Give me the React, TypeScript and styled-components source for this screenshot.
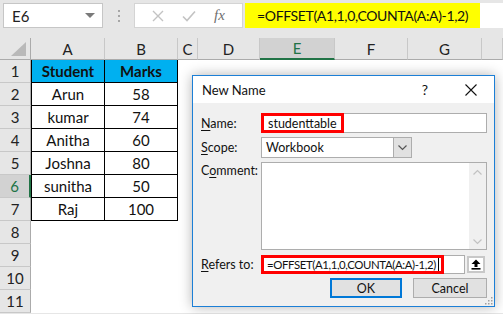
import React from 'react';
import styled, { createGlobalStyle } from 'styled-components';

const GlobalStyle = createGlobalStyle`
  html, body {
    margin: 0;
    padding: 0;
  }
  body {
    background: #fff;
    font-family: Lato, "Liberation Sans", sans-serif;
  }
`;

const GREEN = '#217346';

const Screen = styled.div`
  position: relative;
  width: 503px;
  height: 314px;
  overflow: hidden;
  background: #e6e6e6;
`;

/* ---------- formula bar ---------- */

const FormulaBar = styled.div`
  display: flex;
  align-items: flex-start;
  height: 38px;
  padding-top: 3px;
  padding-left: 3px;
  box-sizing: border-box;
`;

const NameBox = styled.div`
  display: flex;
  align-items: center;
  justify-content: space-between;
  width: 100px;
  height: 25px;
  box-sizing: border-box;
  padding: 0 7px 0 8px;
  background: #fff;
  border: 1px solid #c6c6c6;
  font-size: 15px;
  color: #222;
`;

const DropArrow = styled.span`
  width: 0;
  height: 0;
  border-left: 5px solid transparent;
  border-right: 5px solid transparent;
  border-top: 5px solid #7a7a7a;
`;

const Grip = styled.div`
  width: 31px;
  height: 25px;
  display: flex;
  flex-direction: column;
  align-items: center;
  justify-content: center;
  gap: 3px;

  span {
    width: 2px;
    height: 2px;
    background: #a6a6a6;
  }
`;

const FxBox = styled.div`
  display: flex;
  align-items: center;
  justify-content: space-around;
  width: 109px;
  height: 25px;
  box-sizing: border-box;
  padding: 0 8px;
  background: #fff;
  border: 1px solid #d4d4d4;
  color: #c3c3c3;
`;

const FxLabel = styled.span`
  font-family: "Liberation Serif", serif;
  font-style: italic;
  font-size: 15px;
  color: #6f6f6f;
`;

const FormulaInput = styled.div`
  flex: 1;
  height: 25px;
  margin-left: 2px;
  background: #fff;
  display: flex;
`;

const YellowText = styled.span`
  display: flex;
  align-items: center;
  width: 235px;
  padding-left: 12px;
  box-sizing: border-box;
  background: #ffff00;
  font-size: 14px;
  letter-spacing: -0.35px;
  color: #111;
  white-space: nowrap;
`;

/* ---------- sheet grid ---------- */

const Sheet = styled.div`
  display: grid;
  grid-template-columns: 31px 74px 73px 20px 62px 75px 73px 74px 21px;
  grid-template-rows: 22px repeat(11, 23px);
  font-size: 15px;
  color: #111;
`;

const Corner = styled.div`
  position: relative;
  background: #e6e6e6;
  border-right: 1px solid #ababab;
  border-bottom: 1px solid #ababab;
  box-sizing: border-box;

  &::after {
    content: '';
    position: absolute;
    right: 4px;
    bottom: 3px;
    width: 0;
    height: 0;
    border-left: 15px solid transparent;
    border-bottom: 14px solid #b9b9b9;
  }
`;

const ColHeader = styled.div<{ $selected?: boolean }>`
  display: flex;
  align-items: center;
  justify-content: center;
  box-sizing: border-box;
  background: ${({ $selected }) => ($selected ? '#d2d2d2' : '#e6e6e6')};
  color: ${({ $selected }) => ($selected ? GREEN : '#222')};
  border-right: 1px solid #c8c8c8;
  border-bottom: ${({ $selected }) => ($selected ? `2px solid ${GREEN}` : '1px solid #ababab')};
`;

const RowHeader = styled.div<{ $selected?: boolean }>`
  display: flex;
  align-items: center;
  justify-content: center;
  box-sizing: border-box;
  background: ${({ $selected }) => ($selected ? '#d2d2d2' : '#e6e6e6')};
  color: ${({ $selected }) => ($selected ? GREEN : '#222')};
  border-bottom: 1px solid #c8c8c8;
  border-right: ${({ $selected }) => ($selected ? `2px solid ${GREEN}` : '1px solid #ababab')};
`;

const Cell = styled.div`
  background: #fff;
`;

const TableCell = styled.div<{ $head?: boolean; $first?: boolean }>`
  display: flex;
  align-items: center;
  justify-content: center;
  box-sizing: border-box;
  background: ${({ $head }) => ($head ? '#00b0f0' : '#fff')};
  font-weight: ${({ $head }) => ($head ? 700 : 400)};
  border-right: 1px solid #000;
  border-bottom: 1px solid #000;
  border-left: ${({ $first }) => ($first ? '1px solid #000' : 'none')};
`;

/* ---------- dialog ---------- */

const Dialog = styled.div`
  position: absolute;
  left: 192px;
  top: 75px;
  width: 303px;
  height: 232px;
  box-sizing: border-box;
  border: 1px solid #1c7fd6;
  background: #f0f0f0;
  box-shadow: 0 0 12px rgba(0, 0, 0, 0.3);
  font-family: Lato, "Liberation Sans", sans-serif;
  font-size: 12.5px;
  color: #111;
  display: flex;
  flex-direction: column;
`;

const TitleBar = styled.div`
  display: flex;
  align-items: center;
  justify-content: space-between;
  height: 27px;
  padding-left: 9px;
  background: #fff;
`;

const Title = styled.span`
  font-size: 13px;
  color: #111;
`;

const TitleButtons = styled.div`
  display: flex;
  align-items: center;
`;

const TitleButton = styled.span`
  display: flex;
  align-items: center;
  justify-content: center;
  width: 46px;
  height: 27px;
  font-size: 14px;
`;

const Body = styled.div`
  flex: 1;
  display: flex;
  flex-direction: column;
  gap: 4px;
  padding: 10px 7px 0 8px;
`;

const Form = styled.div`
  display: grid;
  grid-template-columns: 60px 226px;
  grid-template-rows: 20px 21px 88px 20px;
  row-gap: 4px;
`;

const Label = styled.label<{ $top?: boolean }>`
  display: flex;
  align-items: ${({ $top }) => ($top ? 'flex-start' : 'center')};
  padding-top: ${({ $top }) => ($top ? '1px' : '0')};
  white-space: nowrap;

  u {
    text-decoration-thickness: 1px;
    text-underline-offset: 2px;
  }
`;

const TextBox = styled.div<{ $width?: number }>`
  display: flex;
  align-items: stretch;
  width: ${({ $width }) => ($width ? `${$width}px` : '100%')};
  box-sizing: border-box;
  background: #fff;
  border: 1px solid #adadad;
`;

const RedMark = styled.span<{ $width: number; $tight?: boolean }>`
  display: flex;
  align-items: center;
  width: ${({ $width }) => $width}px;
  margin: -1px 0 -1px -1px;
  padding-left: ${({ $tight }) => ($tight ? '3px' : '4px')};
  box-sizing: border-box;
  border: 3px solid #ff0000;
  white-space: nowrap;
  font-size: ${({ $tight }) => ($tight ? '11.4px' : '12.5px')};
  letter-spacing: ${({ $tight }) => ($tight ? '-0.38px' : 'normal')};
`;

const Caret = styled.span`
  width: 1px;
  height: 13px;
  margin-left: 2px;
  background: #000;
`;

const SelectText = styled.span`
  flex: 1;
  display: flex;
  align-items: center;
  padding-left: 4px;
`;

const SelectButton = styled.span`
  display: flex;
  align-items: center;
  justify-content: center;
  width: 17px;
  margin: -1px -1px -1px 0;
  background: #e1e1e1;
  border: 1px solid #adadad;
  color: #555;
`;

const CommentBox = styled.div`
  display: flex;
  justify-content: flex-end;
  box-sizing: border-box;
  background: #fff;
  border: 1px solid #adadad;
`;

const ScrollBar = styled.div`
  width: 17px;
  display: flex;
  flex-direction: column;
  justify-content: space-between;
  align-items: center;
  padding: 6px 0 4px;
  background: #f0f0f0;
  color: #c2c2c2;
`;

const RefersRow = styled.div`
  display: flex;
  align-items: center;
  gap: 2px;
`;

const CollapseButton = styled.span`
  display: flex;
  align-items: center;
  justify-content: center;
  width: 18px;
  height: 17px;
  box-sizing: border-box;
  background: #fff;
  border: 2px solid #c8c8c8;
`;

const Buttons = styled.div`
  display: flex;
  justify-content: flex-end;
  gap: 11px;
`;

const Button = styled.button<{ $primary?: boolean; $width: number }>`
  width: ${({ $width }) => $width}px;
  height: 20px;
  padding: 0;
  box-sizing: border-box;
  background: #e1e1e1;
  border: ${({ $primary }) => ($primary ? '2px solid #0078d7' : '1px solid #adadad')};
  font-family: inherit;
  font-size: 12.5px;
  color: #111;
`;

const ResizeGrip = styled.svg`
  position: absolute;
  right: 1px;
  bottom: 1px;
`;

const students: [string, string][] = [
  ['Arun', '58'],
  ['kumar', '74'],
  ['Anitha', '60'],
  ['Joshna', '80'],
  ['sunitha', '50'],
  ['Raj', '100'],
];

const columns = ['A', 'B', 'C', 'D', 'E', 'F', 'G', ''];

function Chevron({ up }: { up?: boolean }) {
  return (
    <svg width="9" height="6" viewBox="0 0 9 6">
      <path
        d={up ? 'M0.5 5.5 L4.5 1.5 L8.5 5.5' : 'M0.5 0.5 L4.5 4.5 L8.5 0.5'}
        fill="none"
        stroke="currentColor"
        strokeWidth="1.2"
      />
    </svg>
  );
}

function SheetGrid() {
  const rows = [];
  for (let r = 1; r <= 11; r++) {
    const cells = [];
    cells.push(<RowHeader key="h" $selected={r === 6}>{r}</RowHeader>);
    for (let c = 0; c < columns.length; c++) {
      if (r <= 7 && c < 2) {
        const head = r === 1;
        const text = head ? (c === 0 ? 'Student' : 'Marks') : students[r - 2][c];
        cells.push(
          <TableCell key={c} $head={head} $first={c === 0}>
            {text}
          </TableCell>,
        );
      } else {
        cells.push(<Cell key={c} />);
      }
    }
    rows.push(<React.Fragment key={r}>{cells}</React.Fragment>);
  }

  return (
    <Sheet>
      <Corner />
      {columns.map((col, i) => (
        <ColHeader key={i} $selected={col === 'E'}>{col}</ColHeader>
      ))}
      {rows}
    </Sheet>
  );
}

export default function App() {
  return (
    <Screen>
      <GlobalStyle />
      <FormulaBar>
        <NameBox>
          E6
          <DropArrow />
        </NameBox>
        <Grip>
          <span />
          <span />
          <span />
        </Grip>
        <FxBox>
          <svg width="12" height="12" viewBox="0 0 12 12">
            <path d="M1 1 L11 11 M11 1 L1 11" stroke="currentColor" strokeWidth="1.4" />
          </svg>
          <svg width="14" height="12" viewBox="0 0 14 12">
            <path d="M1 6.5 L5 10.5 L13 1.5" stroke="currentColor" strokeWidth="1.6" fill="none" />
          </svg>
          <FxLabel>fx</FxLabel>
        </FxBox>
        <FormulaInput>
          <YellowText>=OFFSET(A1,1,0,COUNTA(A:A)-1,2)</YellowText>
        </FormulaInput>
      </FormulaBar>

      <SheetGrid />

      <Dialog>
        <TitleBar>
          <Title>New Name</Title>
          <TitleButtons>
            <TitleButton>?</TitleButton>
            <TitleButton>
              <svg width="12" height="12" viewBox="0 0 12 12">
                <path d="M0.5 0.5 L11.5 11.5 M11.5 0.5 L0.5 11.5" stroke="#111" strokeWidth="1.1" />
              </svg>
            </TitleButton>
          </TitleButtons>
        </TitleBar>
        <Body>
          <Form>
            <Label><span><u>N</u>ame:</span></Label>
            <TextBox>
              <RedMark $width={83}>studenttable</RedMark>
            </TextBox>

            <Label><span><u>S</u>cope:</span></Label>
            <TextBox $width={151}>
              <SelectText>Workbook</SelectText>
              <SelectButton><Chevron /></SelectButton>
            </TextBox>

            <Label $top><span>C<u>o</u>mment:</span></Label>
            <CommentBox>
              <ScrollBar>
                <Chevron up />
                <Chevron />
              </ScrollBar>
            </CommentBox>

            <Label><span><u>R</u>efers to:</span></Label>
            <RefersRow>
              <TextBox $width={204}>
                <RedMark $width={183} $tight>
                  =OFFSET(A1,1,0,COUNTA(A:A)-1,2)
                  <Caret />
                </RedMark>
              </TextBox>
              <CollapseButton>
                <svg width="10" height="11" viewBox="0 0 10 11">
                  <path d="M5 0.5 L9.5 5 L6.5 5 L6.5 8 L3.5 8 L3.5 5 L0.5 5 Z" fill="#000" />
                  <rect x="0.5" y="9" width="9" height="1.6" fill="#000" />
                </svg>
              </CollapseButton>
            </RefersRow>
          </Form>
          <Buttons>
            <Button $primary $width={72}>OK</Button>
            <Button $width={74}>Cancel</Button>
          </Buttons>
        </Body>
        <ResizeGrip width="10" height="10" viewBox="0 0 10 10">
          {[[8, 2], [8, 5], [5, 5], [8, 8], [5, 8], [2, 8]].map(([x, y], i) => (
            <rect key={i} x={x} y={y} width="1.5" height="1.5" fill="#a0a0a0" />
          ))}
        </ResizeGrip>
      </Dialog>
    </Screen>
  );
}
